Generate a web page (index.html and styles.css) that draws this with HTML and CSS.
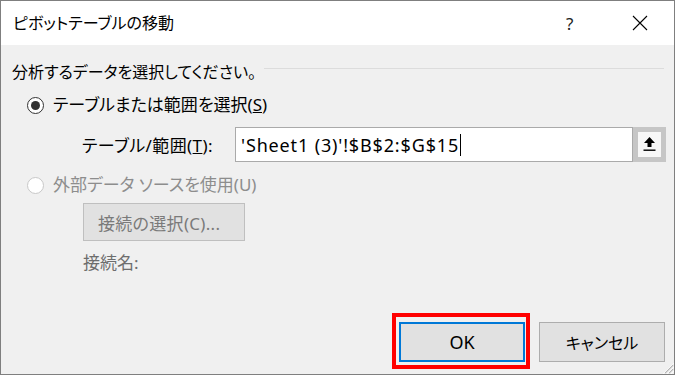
FILE: index.html
```html
<!DOCTYPE html>
<html>
  <head>
    <title>ピボットテーブルの移動</title>
    <meta charset="utf-8" />
    <link rel="stylesheet" href="styles.css">
  </head>
  <body>
    <div class="dialog">
      <!-- Title bar -->
      <div class="titlebar">
        <span class="title">ピボットテーブルの移動</span>
        <span class="help">?</span>
        <span class="close">
          <svg width="16" height="16" viewBox="0 0 16 16">
            <path d="M1 1 L15 15 M15 1 L1 15" stroke="#000" stroke-width="1.1" fill="none" />
          </svg>
        </span>
      </div>

      <div class="body">
        <div class="group-header">
          <span class="group-title">分析するデータを選択してください。</span>
          <div class="group-line"></div>
        </div>

        <div class="radio-row">
          <span class="radio checked"><span class="dot"></span></span>
          <span>テーブルまたは範囲を選択(<u>S</u>)</span>
        </div>

        <div class="range-row">
          <span class="range-label">テーブル/範囲(<u>T</u>):</span>
          <div class="range-input">
            <span class="range-text">'Sheet1 (3)'!$B$2:$G$15</span><span class="caret"></span>
          </div>
          <div class="collapse-btn">
            <svg width="13" height="15" viewBox="0 0 13 15">
              <path d="M6.5 0 L12 6 L8.5 6 L8.5 10 L4.5 10 L4.5 6 L1 6 Z" fill="#000" />
              <rect x="0.5" y="12.5" width="12" height="1.4" fill="#000" />
            </svg>
          </div>
        </div>

        <div class="radio-row disabled">
          <span class="radio"></span>
          <span>外部データ ソースを使用(U)</span>
        </div>

        <div class="conn-btn">接続の選択(C)...</div>

        <div class="conn-name">接続名:</div>

        <div class="footer">
          <div class="btn btn-ok">
            OK
            <span class="highlight"></span>
          </div>
          <div class="btn">キャンセル</div>
        </div>

        <div class="grip">
          <svg width="12" height="12" viewBox="0 0 12 12">
            <path d="M11 3 L3 11 M11 7 L7 11" stroke="#b5b5b5" stroke-width="1.2" />
            <path d="M12 1 L1 12 M12 5 L5 12 M12 9 L9 12" stroke="#fff" stroke-width="0.8" />
          </svg>
        </div>
      </div>
    </div>
  </body>
</html>
```

FILE: styles.css
```css
* {
  box-sizing: border-box;
}

body {
  margin: 0;
  font-family: "Noto Sans", "Noto Sans CJK JP", sans-serif;
  font-size: 16px;
  font-feature-settings: "palt";
  color: #000;
  background: #fff;
}

.dialog {
  width: 675px;
  height: 375px;
  border: 1px solid #7f7f7f;
  display: flex;
  flex-direction: column;
  background: #f0f0f0;
}

.titlebar {
  height: 44px;
  background: #fff;
  display: flex;
  align-items: center;
  padding-left: 12px;
}

.title {
  flex: 1;
  font-size: 16px;
  line-height: 20px;
}

.help {
  font-size: 17px;
  width: 20px;
  margin-right: 46px;
  color: #222;
}

.close {
  display: flex;
  width: 16px;
  margin-right: 26px;
}

.body {
  flex: 1;
  position: relative;
  display: flex;
  flex-direction: column;
  padding-left: 11px;
}

.group-header {
  display: flex;
  align-items: center;
  height: 20px;
  margin-top: 17px;
  line-height: 20px;
}

.group-line {
  flex: 1;
  height: 1px;
  background: #dcdcdc;
  margin-left: 8px;
  margin-right: 10px;
  margin-top: -8px;
}

.radio-row {
  display: flex;
  align-items: center;
  height: 20px;
  margin-top: 13px;
  padding-left: 15px;
  line-height: 20px;
  font-size: 17px;
}

.radio-row.disabled {
  color: #8d8d8d;
  margin-top: 13px;
}

.radio {
  width: 17px;
  height: 17px;
  border-radius: 50%;
  border: 1px solid #c8c8c8;
  background: #fff;
  margin-right: 9px;
  display: flex;
  align-items: center;
  justify-content: center;
}

.radio.checked {
  border: 1px solid #333;
}

.dot {
  width: 9px;
  height: 9px;
  border-radius: 50%;
  background: #333;
}

.range-row {
  display: flex;
  align-items: center;
  height: 35px;
  margin-top: 12px;
  padding-left: 70px;
}

.range-label {
  width: 153px;
  font-size: 17px;
  letter-spacing: 0.4px;
}

.range-input {
  width: 398px;
  height: 35px;
  border: 1px solid #aaaaaa;
  background: #fff;
  display: flex;
  align-items: center;
  padding-left: 5px;
}

.range-text {
  font-size: 18px;
  letter-spacing: 0.85px;
}

.caret {
  width: 1px;
  height: 22px;
  background: #000;
  margin-left: 1px;
}

.collapse-btn {
  width: 33px;
  height: 35px;
  border: 5px solid #c6c6c6;
  background: #f7f7f7;
  display: flex;
  align-items: center;
  justify-content: center;
}

.conn-btn {
  align-self: flex-start;
  width: 162px;
  height: 38px;
  margin-top: 8px;
  margin-left: 71px;
  border: 1px solid #bfbfbf;
  background: #e1e1e1;
  color: #7a7a7a;
  display: flex;
  align-items: center;
  padding-left: 14px;
  font-size: 17px;
  letter-spacing: 0.3px;
}

.conn-name {
  height: 20px;
  line-height: 20px;
  margin-top: 12px;
  margin-left: 71px;
  color: #6d6d6d;
  font-size: 17px;
}

.footer {
  margin-top: auto;
  display: flex;
  justify-content: flex-end;
  gap: 14px;
  padding-right: 9px;
  padding-bottom: 12px;
}

.btn {
  position: relative;
  width: 126px;
  height: 40px;
  border: 1px solid #adadad;
  background: #e1e1e1;
  display: flex;
  align-items: center;
  justify-content: center;
}

.btn-ok {
  border: 2px solid #0078d7;
  font-size: 18px;
}

/* red annotation box around OK */
.highlight {
  position: absolute;
  left: -9px;
  top: -11px;
  right: -7px;
  bottom: -9px;
  border: 4px solid #ff0000;
}

.grip {
  position: absolute;
  right: 0;
  bottom: 0;
  display: flex;
}
```
